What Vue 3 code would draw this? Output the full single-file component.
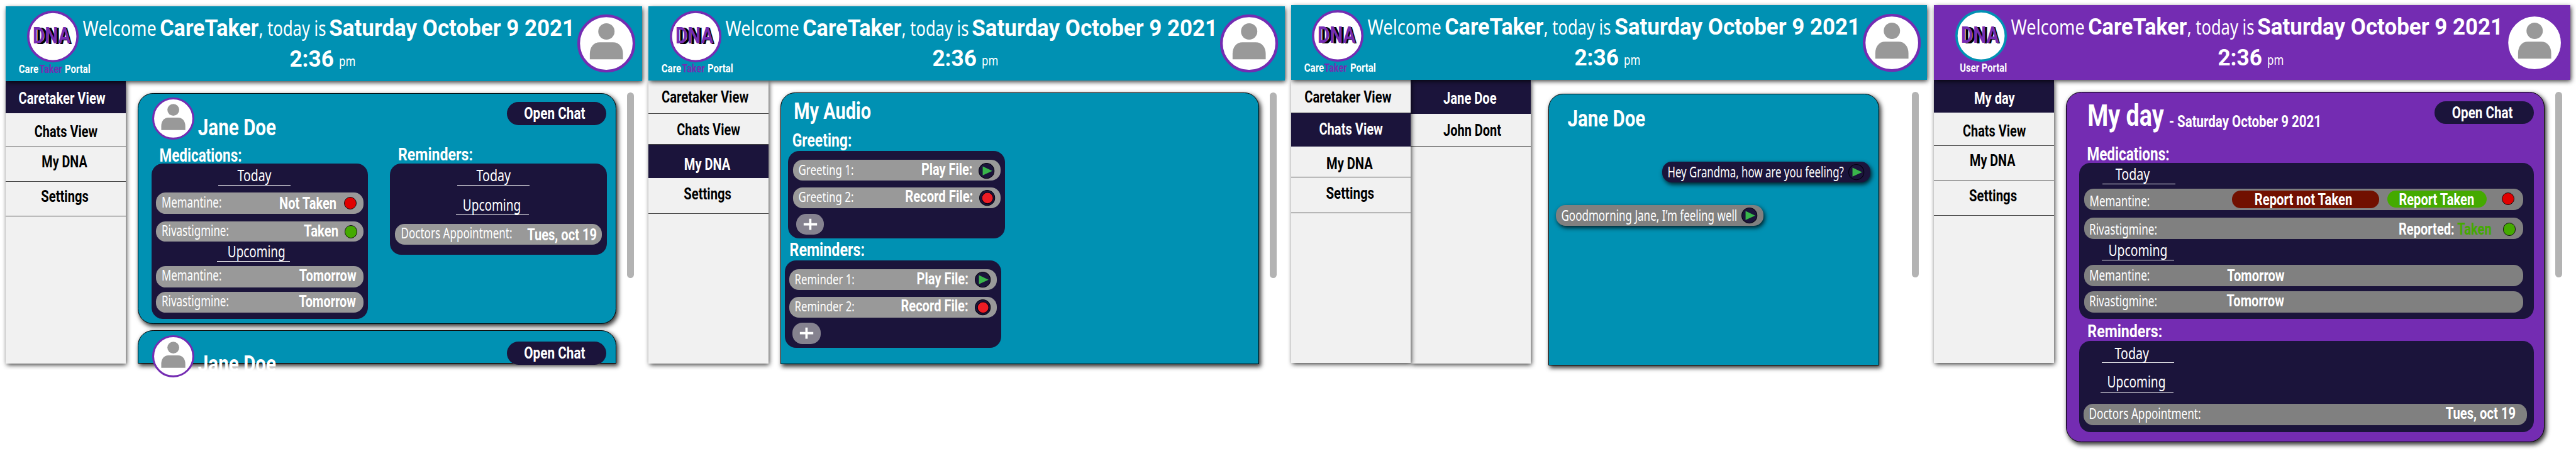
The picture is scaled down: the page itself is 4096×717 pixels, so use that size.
<script setup>
import { h } from 'vue'

// A single line of text: w is its drawn width, c its capital height,
// x and y the space kept to the left of it and above its capitals.
const T = (p) =>
  h('svg', { width: p.w + (p.x || 0), height: p.c + (p.y || 0), overflow: 'visible' }, [
    h('text', {
      x: (p.x || 0) - p.c * 0.06,
      y: p.c + (p.y || 0),
      'font-size': p.c / 0.712,
      textLength: p.w + p.c * 0.1,
      lengthAdjust: 'spacingAndGlyphs',
      fill: 'currentColor',
    }, p.t),
  ])
T.props = ['t', 'w', 'c', 'x', 'y']

const lbl = (t, w, x, y, c = 31) => ({ k: 'label', t, w, x, y, c })
const val = (t, w, x, y, c = 35) => ({ k: 'value', t, w, x, y, c })
const icon = (k, x, y) => ({ k, x, y })
const sub = (t, height, x, w, tx, ty) => ({ k: 'sub', t, h: height, x, w, tx, ty })
const row = (g, height, w, cells, x = 14) => ({ k: 'row', g, h: height, w, cells, x })

const audio = (name, w, gap1, gap2, play, rec) => [
  row(27, 63, 626, [lbl(name + ' 1:', w, 18, 15, 30), val('Play File:', play, gap1, 11, 34), icon('play', 20, 8)]),
  row(20, 63, 626, [lbl(name + ' 2:', w, 18, 13.5, 30), val('Record File:', rec, gap2, 10.5, 34), icon('record', 20, 8)]),
  { k: 'plus', g: 16 },
]

const careMeds = [
  sub('Today', 67, 202, 99, 60, 19),
  row(21, 63, 626, [lbl('Memantine:', 178, 19, 14), val('Not Taken', 169, 177, 15), icon('red', 24.5, 12)]),
  row(23, 62, 626, [lbl('Rivastigmine:', 200, 19, 13.5), val('Taken', 101, 230, 11), icon('green', 19, 12)]),
  sub('Upcoming', 61, 199, 171, 34, 13),
  row(13, 63, 626, [lbl('Memantine:', 178, 19, 13), val('Tomorrow', 169, 237, 10.5)]),
  row(15, 62, 626, [lbl('Rivastigmine:', 200, 19, 13), val('Tomorrow', 169, 215, 10)]),
]
const careReminders = [
  sub('Today', 67, 202, 100, 60, 19),
  sub('Upcoming', 88, 199, 172, 22.6, 40),
  row(27.5, 62, 626, [lbl('Doctors Appointment:', 333, 20, 13), val('Tues, oct 19', 207, 48, 14)]),
]
const userMeds = [
  sub('Today', 64.5, 70, 100, 41.5, 17),
  row(14.5, 65, 1325, [
    lbl('Memantine:', 179, 18, 23),
    { k: 'btn', tone: 'deny', t: 'Report not Taken', bw: 443, w: 292, tx: 70, ty: 8, x: 250, y: 6 },
    { k: 'btn', tone: 'confirm', t: 'Report Taken', bw: 300, w: 224, tx: 37, ty: 9.5, x: 25, y: 4.6 },
    icon('red', 46, 11),
  ]),
  row(23, 64.5, 1325, [lbl('Rivastigmine:', 202, 17, 21), val('Reported:', 165, 733, 16), { ...val('Taken', 100, 12, 16), tone: 'ok' }, icon('green', 35.5, 15)]),
  sub('Upcoming', 64, 67, 175, 22, 16),
  row(12.5, 65, 1325, [lbl('Memantine:', 180, 17, 16, 32), val('Tomorrow', 170, 236, 14)]),
  row(15, 64.5, 1325, [lbl('Rivastigmine:', 202, 17, 15), val('Tomorrow', 170, 214, 11)]),
]
const userReminders = [
  sub('Today', 67.5, 67, 100, 41, 20),
  sub('Upcoming', 88, 64, 173, 22, 39.5),
  row(34.5, 65, 1337, [lbl('Doctors Appointment:', 335, 18, 14), val('Tues, oct 19', 208, 742, 11.5)], 13),
]

const nav = (t, w, x, y, height, active) => ({ t, w, x, y, h: height, active })

const screens = [
  {
    id: 'care',
    nav: [nav('Caretaker View', 259, 41, 33, 98, true), nav('Chats View', 187, 89, 37, 102), nav('My DNA', 134, 111, 25, 105), nav('Settings', 140, 109, 26, 105)],
  },
  {
    id: 'audio',
    nav: [nav('Caretaker View', 259, 42, 32, 100), nav('Chats View', 187.5, 88, 30, 94), nav('My DNA', 136, 110, 40, 100, true), nav('Settings', 140, 109, 30, 109)],
  },
  {
    id: 'chats',
    nav: [nav('Caretaker View', 259, 42.5, 33, 101), nav('Chats View', 189, 86.5, 29, 100, true), nav('My DNA', 136.5, 108.5, 34, 94), nav('Settings', 142, 107.5, 30, 108)],
    people: [nav('Jane Doe', 157, 101, 38, 102, true), nav('John Dont', 171, 101, 32, 99)],
  },
  {
    id: 'user',
    nav: [nav('My day', 119.5, 123.5, 37, 98.5, true), nav('Chats View', 187, 89.5, 37, 101.5), nav('My DNA', 134, 110.5, 26, 105), nav('Settings', 141, 108.5, 26, 105)],
  },
]

const panels = {
  care: [
    { name: 'meds', t: 'Medications:', w: 245, x: 26, y: 3, c: 39, items: careMeds },
    { name: 'rem', t: 'Reminders:', w: 222, x: 27, y: 0, c: 38, items: careReminders },
  ],
  audio: [
    { name: 'greet', t: 'Greeting:', w: 176, x: 15, y: 45, c: 39, items: audio('Greeting', 164, 207, 158, 151, 202) },
    { name: 'remind', t: 'Reminders:', w: 223, x: 16.6, y: 14.6, c: 39, items: audio('Reminder', 178, 191, 143.4, 153, 200) },
  ],
  chats: [],
  user: [
    { name: 'meds', t: 'Medications:', w: 245, x: 26, y: 3, c: 39, items: userMeds },
    { name: 'rem', t: 'Reminders:', w: 222, x: 27.6, y: 17, c: 38, items: userReminders },
  ],
}

const messages = [
  { who: 'me', t: 'Hey Grandma, how are you feeling?', w: 529, y: 16 },
  { who: 'them', t: 'Goodmorning Jane, I’m feeling well', w: 528, y: 15 },
]

const Avatar = (p) =>
  h('svg', { width: p.size, height: p.size, viewBox: '0 0 174 174' }, [
    h('circle', { cx: 87, cy: 87, r: 83, fill: '#fff', stroke: '#742cb2', 'stroke-width': 8 }),
    h('circle', { cx: 87.3, cy: 51, r: 24.5, fill: '#999' }),
    h('path', { d: 'M37.500 134.500V118C37.500 98 49 83.500 67 83.500H107C125 83.500 137 98 137 118V134.500Z', fill: '#999' }),
  ])
Avatar.props = ['size']
</script>

<template>
  <main class="board">
    <section v-for="s in screens" :key="s.id" class="screen" :class="s.id">
      <header class="top">
        <div class="brand">
          <svg class="logo" width="156" height="156" viewBox="0 0 156 156">
            <circle class="ring" cx="78" cy="78" r="74.500" />
            <text x="28" y="100" font-size="69.500" textLength="107" lengthAdjust="spacingAndGlyphs" fill="#000">DNA</text>
            <text x="17" y="99" font-size="69.500" textLength="115" lengthAdjust="spacingAndGlyphs" fill="#742cb2">DNA</text>
          </svg>
          <div v-if="s.id === 'user'" class="portal">
            <T class="b" t="User Portal" :w="139.5" :c="25" :x="80" :y="5" />
          </div>
          <div v-else class="portal">
            <T class="b" t="Care" :w="57" :c="25" :x="41" :y="5" />
            <T class="b accent" t="Taker" :w="67" :c="25" :x="4" :y="5" />
            <T class="b" t="Portal" :w="75" :c="25" :x="11" :y="5" />
          </div>
        </div>
        <div class="greeting">
          <div class="line">
            <T t="Welcome" :w="218" :c="44" :y="44.5" />
            <T class="b" t="CareTaker" :w="293" :c="51" :x="15" :y="37.5" />
            <T t=", today is" :w="198" :c="44" :x="6" :y="44.5" />
            <T class="b" t="Saturday October 9 2021" :w="737" :c="51" :x="15" :y="37.5" />
          </div>
          <div class="line">
            <T class="b" t="2:36" :w="129" :c="49" :x="624.5" :y="43.5" />
            <T t="pm" :w="47" :c="29" :x="19" :y="63" />
          </div>
        </div>
        <Avatar class="me-avatar" :size="175" />
      </header>

      <div class="body">
        <nav class="side main-side">
          <div v-for="n in s.nav" :key="n.t" class="nav" :class="{ active: n.active }" :style="{ height: n.h + 'px' }">
            <T class="b" :t="n.t" :w="n.w" :c="35" :x="n.x" :y="n.y" />
          </div>
        </nav>
        <nav v-if="s.people" class="side people">
          <div v-for="n in s.people" :key="n.t" class="nav" :class="{ active: n.active }" :style="{ height: n.h + 'px' }">
            <T class="b" :t="n.t" :w="n.w" :c="35" :x="n.x" :y="n.y" />
          </div>
        </nav>

        <div class="cards">
          <article class="card">
            <div v-if="s.id === 'care'" class="head">
              <Avatar class="person" :size="127" />
              <T class="b" t="Jane Doe" :w="231" :c="50" :x="14" :y="75.5" />
              <button class="open"><T class="b" t="Open Chat" :w="181" :c="35" :x="54" :y="16" /></button>
            </div>
            <div v-else-if="s.id === 'user'" class="head">
              <T class="b" t="My day" :w="224" :c="66" :x="67" :y="34.5" />
              <T class="b" t="- Saturday October 9 2021" :w="456" :c="35" :x="21" :y="68.5" />
              <button class="open"><T class="b" t="Open Chat" :w="180" :c="35" :x="55" :y="16" /></button>
            </div>
            <T v-else-if="s.id === 'audio'" class="b" t="My Audio" :w="228" :c="51" :x="41.5" :y="26" />
            <T v-else class="b" t="Jane Doe" :w="230" :c="50" :x="59" :y="46" />

            <div v-if="s.id === 'chats'" class="thread">
              <div v-for="m in messages" :key="m.who" class="bubble" :class="m.who">
                <T :t="m.t" :w="m.w" :c="32" :x="18" :y="m.y" />
                <svg class="glyph" width="48" height="48"><circle cx="24" cy="24" r="23" /><path d="M12.500 10.500L41.500 24L12.500 37.500Z" /></svg>
              </div>
            </div>

            <div class="groups">
              <div v-for="p in panels[s.id]" :key="p.name" class="group" :class="p.name">
                <div class="title"><T class="b" :t="p.t" :w="p.w" :c="p.c" :x="p.x" :y="p.y" /></div>
                <div class="panel">
                  <template v-for="(it, i) in p.items" :key="i">
                    <div v-if="it.k === 'sub'" class="sub" :style="{ height: it.h + 'px', marginLeft: it.x + 'px' }">
                      <T :t="it.t" :w="it.w" :c="35" :x="it.tx" :y="it.ty" />
                    </div>
                    <div v-else-if="it.k === 'row'" class="row" :style="{ height: it.h + 'px', width: it.w + 'px', marginTop: it.g + 'px', marginLeft: it.x + 'px' }">
                      <template v-for="(c, j) in it.cells" :key="j">
                        <T v-if="c.k === 'label'" class="label" :t="c.t" :w="c.w" :c="c.c" :x="c.x" :y="c.y" />
                        <T v-else-if="c.k === 'value'" class="b" :class="c.tone" :t="c.t" :w="c.w" :c="c.c" :x="c.x" :y="c.y" />
                        <button v-else-if="c.k === 'btn'" class="report" :class="c.tone" :style="{ width: c.bw + 'px', marginLeft: c.x + 'px', marginTop: c.y + 'px' }">
                          <T class="b" :t="c.t" :w="c.w" :c="35" :x="c.tx" :y="c.ty" />
                        </button>
                        <i v-else-if="c.k === 'red' || c.k === 'green'" class="dot" :class="c.k" :style="{ marginLeft: c.x + 'px', marginTop: c.y + 'px' }"></i>
                        <svg v-else class="glyph" width="48" height="48" :style="{ marginLeft: c.x + 'px', marginTop: c.y + 'px' }">
                          <circle cx="24" cy="24" r="23" />
                          <path v-if="c.k === 'play'" d="M12.500 10.500L41.500 24L12.500 37.500Z" />
                          <circle v-else class="rec" cx="25" cy="24.500" r="17" />
                        </svg>
                      </template>
                    </div>
                    <button v-else class="plus" :style="{ marginTop: it.g + 'px' }">
                      <svg width="85" height="63"><path d="M42.500 14.500V48.500M22.500 31.500H63" /></svg>
                    </button>
                  </template>
                </div>
              </div>
            </div>
          </article>

          <article v-if="s.id === 'care'" class="card next">
            <div class="head">
              <Avatar class="person" :size="127" />
              <T class="b" t="Jane Doe" :w="231" :c="49" :x="14" :y="74" />
              <button class="open"><T class="b" t="Open Chat" :w="181" :c="35" :x="54" :y="16" /></button>
            </div>
          </article>
        </div>
        <div class="scroll"></div>
      </div>
    </section>
  </main>
</template>

<style>
body { margin: 0; background: #fff; }
</style>

<style scoped>
.board {
  zoom: 0.5267;
  display: flex;
  align-items: flex-start;
  width: 7777px;
  height: 1361px;
  overflow: hidden;
  background: #fff;
  color: #fff;
  font-family: "Noto Sans", "Open Sans", sans-serif;
  font-weight: 400;
}
.board svg { display: block; flex: none; overflow: visible; }
.b { font-family: Roboto, "Liberation Sans", sans-serif; font-weight: 700; }
button { display: flex; align-items: flex-start; padding: 0; border: 0; color: #fff; font: inherit; flex: none; }

.screen { flex: none; width: 1920px; --theme: #0091b3; --ring: #742cb2; --pill: #999; }
.care { margin: 19px 0 0 18px; }
.audio { margin: 18.500px 0 0 20px; }
.chats { margin: 16px 0 0 19.500px; }
.user { margin: 16px 0 0 21.500px; --theme: #742cb2; --ring: #0091b3; --pill: #808080; }

.top {
  position: relative;
  z-index: 3;
  display: flex;
  align-items: flex-start;
  height: 225px;
  background: var(--theme);
  box-shadow: 4px 6px 14px rgba(0, 0, 0, 0.8);
}
.brand { width: 234.500px; flex: none; padding-top: 14px; }
.logo { margin-left: 64px; font-family: Roboto, "Liberation Sans", sans-serif; font-weight: 700; }
.ring { fill: #fff; stroke: var(--ring); stroke-width: 7; }
.portal { display: flex; }
.accent { color: #742cb2; }
.greeting { flex: none; }
.line { display: flex; align-items: flex-start; }
.me-avatar { margin: 25px 0 0 9px; }

.body { display: flex; align-items: flex-start; }
.side {
  position: relative;
  z-index: 2;
  flex: none;
  width: 362px;
  height: 854px;
  background: #f1f1f1;
  box-shadow: 4px 6px 14px rgba(0, 0, 0, 0.8);
}
.people { z-index: 1; height: 857px; }
.nav { box-sizing: border-box; border-bottom: 2px solid #444; color: #000; }
.nav.active { background: #1b143b; border-color: #1b143b; color: #fff; }

.cards { flex: none; margin: 36.500px 0 0 36.500px; }
.chats .cards { margin: 41.500px 0 0 53.500px; }
.card {
  box-sizing: border-box;
  width: 1445px;
  border: 2px solid #000;
  border-radius: 46px;
  background: var(--theme);
  box-shadow: 5px 7px 14px rgba(0, 0, 0, 0.8);
}
.care .card { height: 697px; }
.care .card.next { height: 100px; margin-top: 20px; border-radius: 46px 46px 0 0; }
.audio .card { height: 819px; border-radius: 44px 44px 0 0; }
.chats .card { width: 998.500px; height: 820px; border-radius: 44px 44px 0 0; }
.user .card { height: 1057px; }

.head { display: flex; align-items: flex-start; height: 163.500px; }
.person { margin: 12px 0 0 41.500px; }
.open { width: 300px; height: 70px; margin: 25.500px 30px 0 auto; border-radius: 35px; background: #1b143b; }
.next .open { margin-top: 32px; }

.care .groups { display: flex; gap: 67px; margin-left: 38.500px; }
.user .groups { margin-left: 38.500px; }
.title { height: 48px; }
.user .rem .title { height: 66px; }
.panel { width: 654px; background: #1b143b; border-radius: 34px; display: flow-root; }
.care .meds .panel { height: 469px; }
.care .rem .panel { height: 275px; }
.user .panel { width: 1371px; }
.user .meds .panel { height: 472px; }
.user .rem .panel { height: 275.500px; }
.audio .panel { height: 264px; }
.audio .greet { margin-left: 21.500px; }
.audio .greet .title { height: 97px; }
.audio .remind { margin-left: 11px; }
.audio .remind .title { height: 66px; }

.sub { box-sizing: border-box; width: 219px; border-bottom: 3px solid #fff; }
.row { display: flex; align-items: flex-start; background: var(--pill); border-radius: 29px; }
.dot { box-sizing: border-box; flex: none; width: 39px; height: 39px; border: 1.500px solid #111; border-radius: 50%; }
.red { background: #e00000; }
.green { background: #44aa00; }
.ok { color: #44aa00; }
.report { height: 53px; border-radius: 26px; }
.deny { background: #711000; }
.confirm { background: #44aa00; }
.glyph circle { fill: #1b143b; stroke: #05030f; stroke-width: 2; }
.glyph path { fill: #39b54a; }
.glyph .rec { fill: #ed1c24; }
.plus { margin-left: 23px; width: 85px; height: 63px; border-radius: 30px; background: #85828f; }
.plus path { stroke: #fff; stroke-width: 7; fill: none; }

.thread { padding-top: 107px; }
.bubble { display: flex; width: 627.500px; height: 63px; border-radius: 29px; box-shadow: 4px 6px 14px rgba(0, 0, 0, 0.8); }
.bubble .glyph { margin: 8px 0 0 14px; }
.bubble.me { margin-left: 341.500px; background: #1b143b; }
.bubble.them { margin: 69px 0 0 20px; background: #808080; }

.scroll { flex: none; width: 21px; height: 560px; margin: 36px 0 0 31px; border-radius: 11px; background: #b3b3b3; }
.chats .scroll { margin-left: 98.500px; }
</style>
